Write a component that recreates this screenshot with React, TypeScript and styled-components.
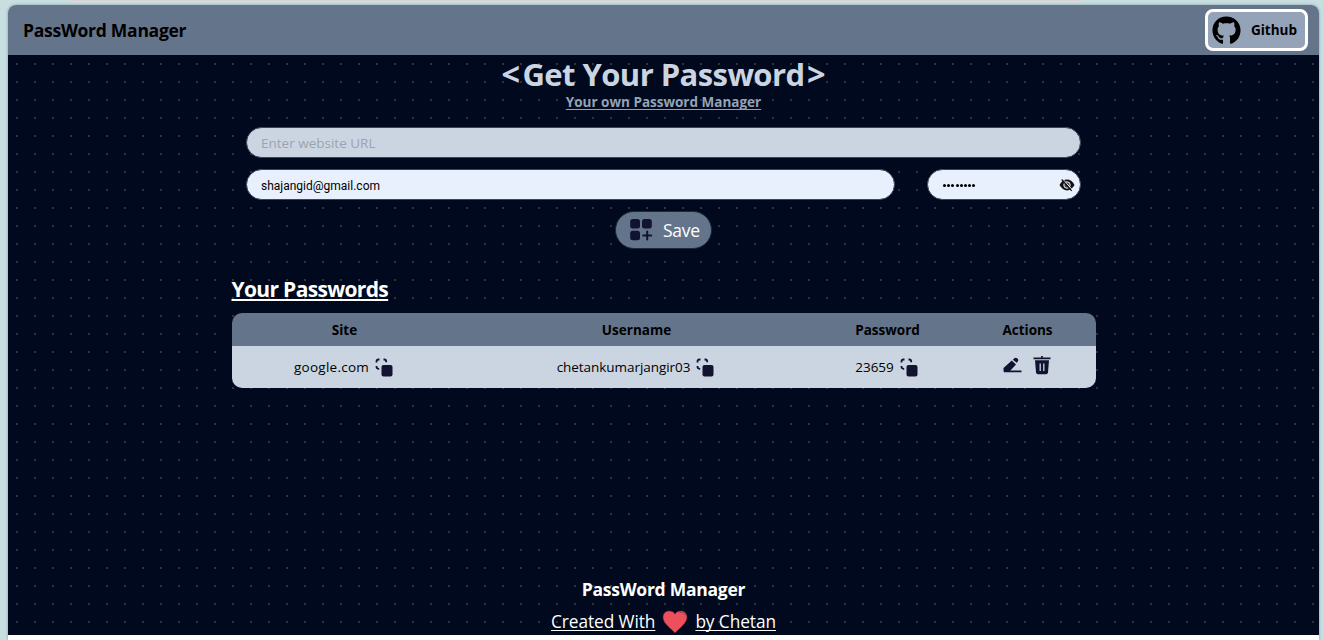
import React from 'react';
import styled, { createGlobalStyle } from 'styled-components';
import { FaGithub } from 'react-icons/fa';

const GlobalStyle = createGlobalStyle`
  * { box-sizing: border-box; }
  body {
    margin: 0;
    background: #c8dfe2;
    font-family: 'Segoe UI', 'Open Sans', 'Noto Sans', sans-serif;
    overflow: hidden;
  }
`;

const Frame = styled.div`
  height: 640px;
  padding: 0 4px 0 8px;
  display: flex;
  flex-direction: column;
`;

const TopEdge = styled.div`
  height: 5px;
  margin-left: 62px;
  width: 1012px;
  border-top: 1px solid #dad3d5;
`;

const Page = styled.div`
  height: 635px;
  background: #fff;
  border-radius: 8px 8px 0 0;
  box-shadow: 0 0 3px rgba(60, 90, 100, 0.5);
  overflow: hidden;
`;

const Header = styled.header`
  height: 50px;
  padding: 0 11px 0 15px;
  background: #64748b;
  display: flex;
  align-items: center;
  justify-content: space-between;
`;

const Text = styled.span<{ $size: number; $spacing?: number; $bold?: boolean; $line?: boolean }>`
  font-size: ${(p) => p.$size}px;
  letter-spacing: ${(p) => p.$spacing ?? 0}px;
  font-weight: ${(p) => (p.$bold ? 700 : 400)};
  text-decoration: ${(p) => (p.$line ? 'underline' : 'none')};
  text-decoration-thickness: 1px;
  text-decoration-skip-ink: none;
  text-underline-offset: 2px;
  white-space: nowrap;
`;

const GithubButton = styled.button`
  width: 103px;
  height: 42px;
  padding: 0 8px 0 4px;
  border: 3px solid #fff;
  border-radius: 8px;
  background: #94a3b8;
  color: #000;
  font-family: inherit;
  display: flex;
  align-items: center;
  justify-content: space-between;
`;

const Main = styled.main`
  height: 580px;
  background: radial-gradient(#333 1px, #00091d 1px) 0 0 / 18px 18px;
  display: flex;
  flex-direction: column;
  align-items: center;
`;

const Title = styled.h1`
  margin: 2px 0 0;
  height: 35px;
  line-height: 34px;
  color: #cbd5e1;
  display: flex;
  gap: 2.5px;
`;

const Subtitle = styled.p`
  margin: 0;
  height: 35px;
  font-size: 13.5px;
  line-height: 20px;
  color: #94a3b8;
`;

const Form = styled.form`
  width: 835px;
  display: flex;
  flex-direction: column;
  align-items: center;
  gap: 11px;
`;

const FieldRow = styled.div`
  width: 100%;
  display: flex;
  justify-content: space-between;
`;

const Field = styled.div<{ $width: number; $filled?: boolean }>`
  width: ${(p) => p.$width}px;
  height: 31px;
  padding: 0 5px 0 14px;
  border: 1px solid #3a475b;
  border-radius: 16px;
  background: ${(p) => (p.$filled ? '#e8f0fe' : '#cbd5e1')};
  color: ${(p) => (p.$filled ? '#000' : '#9ca3af')};
  display: flex;
  align-items: center;
  justify-content: space-between;
`;

const Value = styled(Text)`
  font-family: Roboto, 'Liberation Sans', sans-serif;
  padding-top: 2px;
`;

const Bullets = styled.span`
  padding: 2px 0 0 1px;
  display: flex;
  gap: 1.2px;
`;

const Bullet = styled.i`
  width: 3px;
  height: 3px;
  border-radius: 50%;
  background: #000;
`;

const SaveButton = styled.button`
  width: 97px;
  height: 38px;
  padding: 0 11px 0 13px;
  border: 1px solid #1e293b;
  border-radius: 19px;
  background: #64748b;
  color: #fff;
  font-family: inherit;
  display: flex;
  align-items: center;
  justify-content: space-between;
`;

const SaveLabel = styled(Text)`
  padding-bottom: 1px;
`;

const Passwords = styled.section`
  width: 864px;
  margin-top: 22px;
`;

const Heading = styled.h2`
  margin: 0;
  height: 42px;
  line-height: 33px;
  color: #fff;
  span { text-decoration-thickness: 2px; text-underline-offset: 2px; }
`;

const Table = styled.div`
  border-radius: 10px;
  overflow: hidden;
`;

const Row = styled.div<{ $head?: boolean }>`
  height: ${(p) => (p.$head ? 33 : 42)}px;
  padding-top: ${(p) => (p.$head ? 1 : 0)}px;
  background: ${(p) => (p.$head ? '#64748b' : '#cbd5e1')};
  color: #000;
  display: grid;
  grid-template-columns: 226px 358px 144px 136px;
`;

const Cell = styled.div<{ $gap?: number }>`
  display: flex;
  align-items: center;
  justify-content: center;
  gap: ${(p) => p.$gap ?? 6}px;
`;

const DataCell = styled(Cell)`
  padding-right: 2px;
`;

const ActionCell = styled(DataCell)`
  padding-bottom: 5px;
`;

const Footer = styled.footer`
  margin-top: auto;
  height: 59px;
  color: #fff;
  display: flex;
  flex-direction: column;
  align-items: center;
`;

const FooterLine = styled.div<{ $height: number }>`
  height: ${(p) => p.$height}px;
  flex-shrink: 0;
  display: flex;
  align-items: center;
  gap: 7px;
`;

const ink = '#121331';

const AddIcon = () => (
  <svg width="24" height="24" viewBox="0 0 24 24" fill={ink}>
    <rect x="1.200" y="1" width="9.800" height="9.500" rx="2.5" />
    <rect x="13" y="1" width="9.800" height="9.500" rx="2.5" />
    <rect x="1.200" y="12.800" width="9.800" height="9.500" rx="2.5" />
    <path d="M18.200 13.500v8M14.200 17.500h8" stroke={ink} strokeWidth="2" strokeLinecap="round" />
  </svg>
);

const CopyIcon = () => (
  <svg width="18" height="20" viewBox="0 0 18 20">
    <path
      d="M1.500 5.500V4.500q0-2 2-2h1M8.500 2.500h.7q2 0 2 2v.8M1.500 9v.8q0 1.700 2 2h.7"
      fill="none"
      stroke={ink}
      strokeWidth="1.8"
    />
    <rect x="6.500" y="8" width="11" height="11.500" rx="2" fill={ink} />
  </svg>
);

const EyeOffIcon = () => (
  <svg width="16" height="14" viewBox="0 0 16 14">
    <path d="M.5 7Q3.500 1.600 8 1.600T15.500 7Q12.500 12.400 8 12.400T.5 7z" fill="#111" />
    <circle cx="8" cy="7" r="3.200" fill="#444" stroke="#e8f0fe" strokeWidth="1" />
    <path d="M3.700 1L13.700 12.200" stroke="#e8f0fe" strokeWidth="1" />
    <path d="M2.700 1.500L12.700 12.800" stroke="#111" strokeWidth="1.200" />
  </svg>
);

const EditIcon = () => (
  <svg width="19" height="18" viewBox="0 0 19 18" fill={ink}>
    <path d="M.5 15.500V12L8.800 4.600l4.200 4L6.500 15.500z" />
    <path d="M9.800 3.700l1.300-1.200q1.700-1.400 3.300.1t.2 3.200l-.9.9z" />
    <path d="M1 15.300h17.500" stroke={ink} strokeWidth="1.700" />
  </svg>
);

const TrashIcon = () => (
  <svg width="18" height="20" viewBox="0 0 18 20">
    <path d="M.5 3.300h17M9 1v2" stroke={ink} strokeWidth="1.700" />
    <path d="M2 5.300h14l-1 11.900q-.2 2-2 2H5q-1.800 0-2-2z" fill={ink} />
    <path d="M7.200 8.500v7.500M10.800 8.500v7.500" stroke="#cbd5e1" strokeWidth="1.300" />
  </svg>
);

const HeartIcon = () => (
  <svg width="26" height="24" viewBox="0 0 26 24">
    <path
      d="M13 23C9 18.500 1 13.500 1 7.300 1 3.500 3.500 1 7 1c3 0 5 1.200 6 3.200C14 2.200 16 1 19 1c3.500 0 6 2.500 6 6.300C25 13.500 17 18.500 13 23z"
      fill="#ee4f5c"
      stroke="#5c2840"
      strokeWidth=".6"
    />
    <path d="M17.500 2.200q4.700-.5 6 3.600" fill="none" stroke="#70303e" strokeWidth="1" strokeDasharray="1.500 1" />
  </svg>
);

const entry = [
  { value: 'google.com', spacing: 0.25, gap: 6 },
  { value: 'chetankumarjangir03', spacing: -0.05, gap: 6 },
  { value: '23659', spacing: 0, gap: 6 },
];

export default function App() {
  return (
    <Frame>
      <GlobalStyle />
      <TopEdge />
      <Page>
        <Header>
          <Text $size={17.5} $spacing={-0.27} $bold>PassWord Manager</Text>
          <GithubButton>
            <FaGithub size={29} />
            <Text $size={13.5} $bold>Github</Text>
          </GithubButton>
        </Header>
        <Main>
          <Title>
            <Text $size={32.5} $bold>&lt;</Text>
            <Text $size={31} $spacing={-0.57} $bold>Get Your Password</Text>
            <Text $size={32.5} $bold>&gt;</Text>
          </Title>
          <Subtitle><Text $size={13.5} $bold $line>Your own Password Manager</Text></Subtitle>
          <Form>
            <Field $width={835}><Text $size={13.5}>Enter website URL</Text></Field>
            <FieldRow>
              <Field $width={649} $filled><Value $size={12}>shajangid@gmail.com</Value></Field>
              <Field $width={154} $filled>
                <Bullets>{Array.from({ length: 8 }, (_, i) => <Bullet key={i} />)}</Bullets>
                <EyeOffIcon />
              </Field>
            </FieldRow>
            <SaveButton type="button">
              <AddIcon />
              <SaveLabel $size={17.5} $spacing={-0.2}>Save</SaveLabel>
            </SaveButton>
          </Form>
          <Passwords>
            <Heading><Text $size={21} $spacing={-0.66} $bold $line>Your Passwords</Text></Heading>
            <Table>
              <Row $head>
                {['Site', 'Username', 'Password', 'Actions'].map((label) => (
                  <Cell key={label}><Text $size={13.5} $bold>{label}</Text></Cell>
                ))}
              </Row>
              <Row>
                {entry.map(({ value, spacing, gap }) => (
                  <DataCell key={value} $gap={gap}><Text $size={13.5} $spacing={spacing}>{value}</Text><CopyIcon /></DataCell>
                ))}
                <ActionCell $gap={11}><EditIcon /><TrashIcon /></ActionCell>
              </Row>
            </Table>
          </Passwords>
          <Footer>
            <FooterLine $height={26}><Text $size={17.5} $spacing={-0.25} $bold>PassWord Manager</Text></FooterLine>
            <FooterLine $height={39}>
              <Text $size={17.3} $spacing={-0.08} $line>Created With</Text>
              <HeartIcon />
              <Text $size={17.3} $spacing={-0.08} $line>by Chetan</Text>
            </FooterLine>
          </Footer>
        </Main>
      </Page>
    </Frame>
  );
}
